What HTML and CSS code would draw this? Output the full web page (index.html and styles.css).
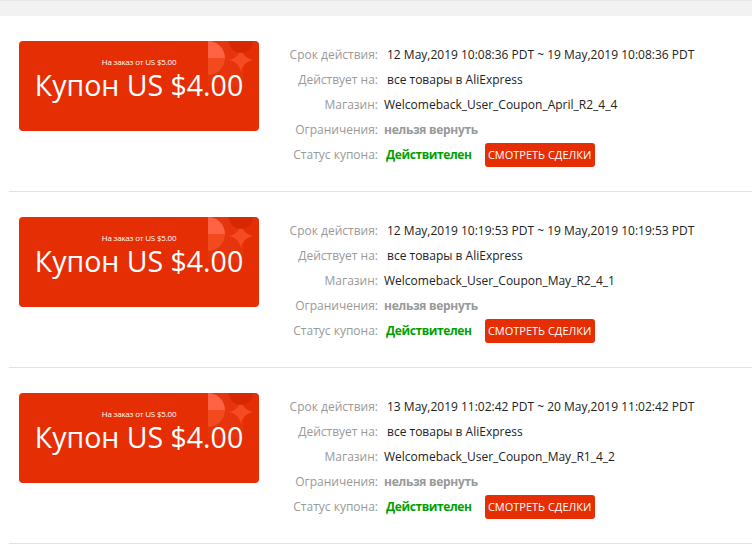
FILE: index.html
```html
<!DOCTYPE html>
<html lang="ru">
<head>
<meta charset="utf-8">
<title>Купоны</title>
<link rel="stylesheet" href="styles.css">
</head>
<body>
<div class="topbar"></div>
<div class="list">
  <div class="item">
    <div class="coupon">
      <svg class="deco" width="51" height="52" viewBox="0 0 51 52">
        <rect x="0" y="0" width="35" height="46" fill="#ffffff" opacity="0.035"/>
        <path d="M0 17 V0 A17 17 0 0 1 17 17 Z" fill="#ff6244"/>
        <path d="M0 17 H17 A17 17 0 0 1 0 34 Z" fill="#f2491f"/>
        <path d="M33 5 A14 14 0 0 0 47 19 A14 14 0 0 0 33 33 A14 14 0 0 0 19 19 A14 14 0 0 0 33 5 Z" fill="#f44b22"/>
        <circle cx="33" cy="0" r="12" fill="#d62903"/>
      </svg>
      <div class="cond">На заказ от US $5.00</div>
      <div class="amount">Купон US $4.00</div>
    </div>
    <div class="info">
      <div class="lbl">Срок действия:</div>
      <div class="val sp">12 May,2019 10:08:36 PDT ~ 19 May,2019 10:08:36 PDT</div>
      <div class="lbl">Действует на:</div>
      <div class="val sp">все товары в AliExpress</div>
      <div class="lbl">Магазин:</div>
      <div class="val">Welcomeback_User_Coupon_April_R2_4_4</div>
      <div class="lbl">Ограничения:</div>
      <div class="val restr">нельзя вернуть</div>
      <div class="lbl">Статус купона:</div>
      <div class="val status"><span class="ok">Действителен</span><a class="btn" href="#">СМОТРЕТЬ СДЕЛКИ</a></div>
    </div>
  </div>
  <div class="item">
    <div class="coupon">
      <svg class="deco" width="51" height="52" viewBox="0 0 51 52">
        <rect x="0" y="0" width="35" height="46" fill="#ffffff" opacity="0.035"/>
        <path d="M0 17 V0 A17 17 0 0 1 17 17 Z" fill="#ff6244"/>
        <path d="M0 17 H17 A17 17 0 0 1 0 34 Z" fill="#f2491f"/>
        <path d="M33 5 A14 14 0 0 0 47 19 A14 14 0 0 0 33 33 A14 14 0 0 0 19 19 A14 14 0 0 0 33 5 Z" fill="#f44b22"/>
        <circle cx="33" cy="0" r="12" fill="#d62903"/>
      </svg>
      <div class="cond">На заказ от US $5.00</div>
      <div class="amount">Купон US $4.00</div>
    </div>
    <div class="info">
      <div class="lbl">Срок действия:</div>
      <div class="val sp">12 May,2019 10:19:53 PDT ~ 19 May,2019 10:19:53 PDT</div>
      <div class="lbl">Действует на:</div>
      <div class="val sp">все товары в AliExpress</div>
      <div class="lbl">Магазин:</div>
      <div class="val">Welcomeback_User_Coupon_May_R2_4_1</div>
      <div class="lbl">Ограничения:</div>
      <div class="val restr">нельзя вернуть</div>
      <div class="lbl">Статус купона:</div>
      <div class="val status"><span class="ok">Действителен</span><a class="btn" href="#">СМОТРЕТЬ СДЕЛКИ</a></div>
    </div>
  </div>
  <div class="item">
    <div class="coupon">
      <svg class="deco" width="51" height="52" viewBox="0 0 51 52">
        <rect x="0" y="0" width="35" height="46" fill="#ffffff" opacity="0.035"/>
        <path d="M0 17 V0 A17 17 0 0 1 17 17 Z" fill="#ff6244"/>
        <path d="M0 17 H17 A17 17 0 0 1 0 34 Z" fill="#f2491f"/>
        <path d="M33 5 A14 14 0 0 0 47 19 A14 14 0 0 0 33 33 A14 14 0 0 0 19 19 A14 14 0 0 0 33 5 Z" fill="#f44b22"/>
        <circle cx="33" cy="0" r="12" fill="#d62903"/>
      </svg>
      <div class="cond">На заказ от US $5.00</div>
      <div class="amount">Купон US $4.00</div>
    </div>
    <div class="info">
      <div class="lbl">Срок действия:</div>
      <div class="val sp">13 May,2019 11:02:42 PDT ~ 20 May,2019 11:02:42 PDT</div>
      <div class="lbl">Действует на:</div>
      <div class="val sp">все товары в AliExpress</div>
      <div class="lbl">Магазин:</div>
      <div class="val">Welcomeback_User_Coupon_May_R1_4_2</div>
      <div class="lbl">Ограничения:</div>
      <div class="val restr">нельзя вернуть</div>
      <div class="lbl">Статус купона:</div>
      <div class="val status"><span class="ok">Действителен</span><a class="btn" href="#">СМОТРЕТЬ СДЕЛКИ</a></div>
    </div>
  </div>
</div>
</body>
</html>
```
FILE: styles.css
```css
html, body {
  margin: 0;
  padding: 0;
  background: #ffffff;
}
body {
  font-family: "Open Sans", "Noto Sans", sans-serif;
  color: #333333;
  width: 752px;
  overflow: hidden;
}
.topbar {
  height: 15px;
  background: #f2f2f2;
  border-top: 1px solid #e6e6e6;
}
.list {
  margin-left: 9px;
}
.item {
  display: flex;
  align-items: flex-start;
  padding: 25px 0 24px 10px;
  border-bottom: 1px solid #e3e3e3;
}
.coupon {
  position: relative;
  flex: none;
  width: 240px;
  height: 90px;
  box-sizing: border-box;
  padding-top: 16px;
  background: #e62e04;
  border-radius: 4px;
  overflow: hidden;
  color: #ffffff;
  text-align: center;
}
.deco {
  position: absolute;
  top: 0;
  right: 0;
  display: block;
}
.cond {
  position: relative;
  font-size: 8px;
  line-height: 9px;
  letter-spacing: -0.2px;
}
.amount {
  position: relative;
  font-size: 28.5px;
  line-height: 39px;
}
.info {
  margin: 1px 0 0 30px;
  display: grid;
  grid-template-columns: 89px auto;
  grid-auto-rows: 25px;
  column-gap: 6px;
  align-items: center;
  font-size: 12px;
  white-space: nowrap;
}
.lbl {
  text-align: right;
  color: #999999;
}
.val {
  color: #222222;
}
.sp {
  padding-left: 3px;
}
.restr {
  color: #999999;
  font-weight: 700;
  letter-spacing: -0.3px;
}
.status {
  display: flex;
  align-items: center;
  padding-left: 2px;
}
.ok {
  color: #00a000;
  font-weight: 700;
  letter-spacing: -0.4px;
}
.btn {
  margin-left: 13px;
  display: inline-block;
  width: 110px;
  height: 24px;
  line-height: 24px;
  background: #e62e04;
  color: #ffffff;
  border-radius: 3px;
  font-size: 11px;
  text-align: center;
  text-decoration: none;
}
```
